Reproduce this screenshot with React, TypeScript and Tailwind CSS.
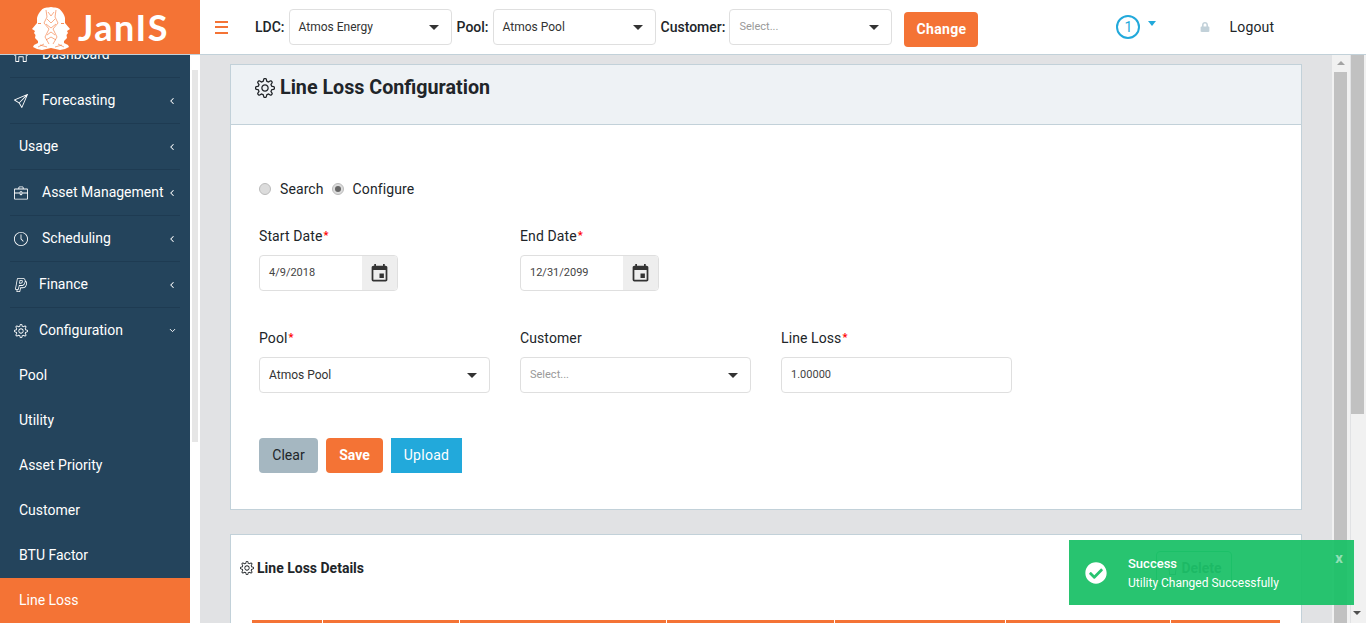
import { ChevronDown, ChevronLeft } from "lucide-react";
import { FaCheckCircle, FaLock } from "react-icons/fa";
import { MdEvent } from "react-icons/md";
import {
  SlBriefcase,
  SlClock,
  SlHome,
  SlPaperPlane,
  SlPaypal,
  SlSettings,
  SlTrash,
} from "react-icons/sl";

const font = { fontFamily: "Roboto, sans-serif" };

function Logo() {
  const half = (
    <>
      <path
        d="M19 0C15 1 12 0 9.500 3 7 6 5.500 8 5 11L5 16 0 22 3 24 2 26 3.500 28 3 31 6 34 6 36 2 38 1 40 5 42 10 43 19 41Z"
        fill="#fff"
      />
      <path
        d="M14 3 15 10 12 16 17 22 13 30 17 37M16 5 19 9M15 12 19 16M14 17 19 21M15 28 19 25M14 33 19 30M8 38 15 40M6 40 12 37"
        stroke="#f47435"
        strokeWidth="0.6"
        fill="none"
      />
      <path d="M6 16.500H9" stroke="#f47435" strokeWidth="0.8" />
    </>
  );
  return (
    <svg width="38" height="43" viewBox="0 0 38 43" className="mt-[3px] shrink-0">
      {half}
      <g transform="translate(38 0) scale(-1 1)">{half}</g>
    </svg>
  );
}

function Chevron({ open }: { open?: boolean }) {
  return open ? (
    <ChevronDown size={9} strokeWidth={2.5} className="text-white" />
  ) : (
    <ChevronLeft size={10} strokeWidth={2.5} className="text-white" />
  );
}

const mainMenu = [
  { name: "Dashboard", icon: <SlHome size={14} />, pad: "pl-[42px]" },
  { name: "Forecasting", icon: <SlPaperPlane size={14} />, pad: "pl-[42px]", arrow: true },
  { name: "Usage", pad: "pl-[19px]", arrow: true },
  { name: "Asset Management", icon: <SlBriefcase size={14} />, pad: "pl-[42px]", arrow: true },
  { name: "Scheduling", icon: <SlClock size={14} />, pad: "pl-[42px]", arrow: true },
  { name: "Finance", icon: <SlPaypal size={14} />, pad: "pl-[39px]", arrow: true },
];

const subMenu = ["Pool", "Utility", "Asset Priority", "Customer", "BTU Factor"];

function Sidebar() {
  return (
    <aside className="relative flex h-full w-[200px] shrink-0 overflow-hidden bg-white">
      <div className="h-full w-[190px] shrink-0 overflow-hidden bg-[#24445c] text-[14px] text-white">
        <div className="-mt-[23px]">
          {mainMenu.map((item) => (
            <div key={item.name} className="relative mx-[10px] flex h-[46px] items-center border-b border-[#1e3b52]">
              {item.icon && <span className="absolute left-[4px]">{item.icon}</span>}
              <span className={`-ml-[10px] ${item.pad}`}>{item.name}</span>
              {item.arrow && (
                <span className="absolute right-[3px]">
                  <Chevron />
                </span>
              )}
            </div>
          ))}
          <div className="relative mx-[10px] flex h-[45px] items-center">
            <span className="absolute left-[4px]">
              <SlSettings size={14} />
            </span>
            <span className="-ml-[10px] pl-[39px]">Configuration</span>
            <span className="absolute right-[3px]">
              <Chevron open />
            </span>
          </div>
          {subMenu.map((name) => (
            <div key={name} className="flex h-[45px] items-center pl-[19px]">
              {name}
            </div>
          ))}
          <div className="flex h-[45px] items-center bg-[#f47335] pl-[19px]">Line Loss</div>
        </div>
      </div>
      <div className="ml-[2px] mt-[15px] h-[372px] w-[6px] bg-[#e6e6e6]" />
    </aside>
  );
}

function Caret() {
  return <span className="h-0 w-0 border-x-[5px] border-t-[5px] border-x-transparent border-t-[#333]" />;
}

function Select({ value, placeholder, className }: { value?: string; placeholder?: string; className: string }) {
  return (
    <div
      className={`flex h-[36px] items-center justify-between rounded-[4px] border border-[#dfdfdf] bg-white pl-[9px] pr-[9px] ${className}`}
    >
      {value ? (
        <span className="text-[12px] text-[#333]">{value}</span>
      ) : (
        <span className="text-[11px] text-[#999]">{placeholder}</span>
      )}
      <span className="flex w-[16px] justify-center">
        <Caret />
      </span>
    </div>
  );
}

function Header() {
  return (
    <header className="flex h-[55px] shrink-0 items-center border-b border-[#c2d1d9] bg-white">
      <div className="flex h-full w-[200px] shrink-0 items-center bg-[#f47335] pl-[32px]">
        <Logo />
        <span className="ml-[8px] text-[36px] font-bold leading-none tracking-[1.500px] text-white" style={{ fontFamily: "Lato, sans-serif" }}>
          JanIS
        </span>
      </div>
      <div className="ml-[15px] flex w-[13px] flex-col gap-[3.500px]">
        <span className="h-[2px] bg-[#f47335]" />
        <span className="h-[2px] bg-[#f47335]" />
        <span className="h-[2px] bg-[#f47335]" />
      </div>
      <span className="ml-[27px] text-[14px] font-medium text-[#212529]">LDC:</span>
      <Select value="Atmos Energy" className="ml-[4px] w-[163px]" />
      <span className="ml-[5px] text-[14px] font-medium text-[#212529]">Pool:</span>
      <Select value="Atmos Pool" className="ml-[4px] w-[163px]" />
      <span className="ml-[5px] text-[14px] font-medium text-[#212529]">Customer:</span>
      <Select placeholder="Select..." className="ml-[4px] w-[163px]" />
      <button className="ml-[12px] mt-[5px] h-[35px] w-[74px] rounded-[4px] bg-[#f47335] text-[14px] font-bold tracking-[0.3px] text-white">
        Change
      </button>
      <span className="ml-[138px] flex h-[24px] w-[24px] items-center justify-center rounded-full border-2 border-[#22a9db] text-[14px] text-[#22a9db]">
        1
      </span>
      <span className="-mt-[8px] ml-[8px] h-0 w-0 border-x-[4.500px] border-t-[5px] border-x-transparent border-t-[#22a9db]" />
      <span className="ml-[44px] text-[#c2d1d9]">
        <FaLock size={10} />
      </span>
      <span className="ml-[19px] text-[14px] tracking-[0.2px] text-[#212529]">Logout</span>
    </header>
  );
}

function Radio({ checked }: { checked?: boolean }) {
  return (
    <span className="flex h-[12px] w-[12px] items-center justify-center rounded-full border border-[#bbb] bg-[#dcdcdc]">
      {checked && <span className="h-[6px] w-[6px] rounded-full bg-[#666]" />}
    </span>
  );
}

function Field({ label, required, children }: { label: string; required?: boolean; children: React.ReactNode }) {
  return (
    <div>
      <div className="flex h-[20px] items-center text-[14px] tracking-[0.1px] text-[#212529]">
        {label}
        {required && <span className="ml-[1px] text-[11px] font-bold text-[#f00]">*</span>}
      </div>
      <div className="mt-[9px]">{children}</div>
    </div>
  );
}

function DateInput({ value }: { value: string }) {
  return (
    <div className="flex h-[36px] w-[139px] overflow-hidden rounded-[4px] border border-[#dfdfdf]">
      <div className="flex flex-1 items-center pl-[9px] text-[11px] text-[#444]">{value}</div>
      <div className="flex w-[35px] items-center justify-center bg-[#eeeeee] text-[#333]">
        <MdEvent size={21} />
      </div>
    </div>
  );
}

const columns = ["w-[70px]", "w-[136px]", "w-[206px]", "w-[167px]", "w-[170px]", "w-[164px]", "w-[109px]"];

function Content() {
  return (
    <main className="h-full w-[1102px] shrink-0 overflow-hidden pl-[30px] pt-[9px]">
      <section className="h-[446px] w-[1072px] border border-[#c2d1d9] bg-white">
        <div className="flex h-[60px] items-center gap-[5px] border-b border-[#c2d1d9] bg-[#eef2f5] pb-[15px] pl-[24px] pt-[2px]">
          <SlSettings size={20} className="text-[#212529]" />
          <h1 className="text-[19.700px] font-bold text-[#212529]">Line Loss Configuration</h1>
        </div>
        <div className="pl-[28px]">
          <div className="mt-[55px] flex h-[18px] items-center text-[14px] tracking-[0.1px] text-[#212529]">
            <Radio />
            <span className="ml-[9px]">Search</span>
            <span className="ml-[8px]">
              <Radio checked />
            </span>
            <span className="ml-[9px]">Configure</span>
          </div>
          <div className="mt-[28px] grid w-[753px] grid-cols-3 gap-x-[30px]">
            <Field label="Start Date" required>
              <DateInput value="4/9/2018" />
            </Field>
            <Field label="End Date" required>
              <DateInput value="12/31/2099" />
            </Field>
            <div />
          </div>
          <div className="mt-[37px] grid w-[753px] grid-cols-3 gap-x-[30px]">
            <Field label="Pool" required>
              <Select value="Atmos Pool" className="w-[231px]" />
            </Field>
            <Field label="Customer">
              <Select placeholder="Select..." className="w-[231px]" />
            </Field>
            <Field label="Line Loss" required>
              <div className="flex h-[36px] w-[231px] items-center rounded-[4px] border border-[#dfdfdf] pl-[9px] text-[11px] text-[#444]">
                1.00000
              </div>
            </Field>
          </div>
          <div className="mt-[45px] flex gap-[8px] text-[14px]">
            <button className="h-[35px] w-[59px] rounded-[4px] bg-[#a5b7c1] text-[#212529]">Clear</button>
            <button className="h-[35px] w-[57px] rounded-[4px] bg-[#f47335] font-bold text-white">Save</button>
            <button className="h-[35px] w-[71px] bg-[#22a9db] tracking-[0.3px] text-white">Upload</button>
          </div>
        </div>
      </section>
      <section className="mt-[24px] h-[200px] w-[1072px] border border-[#c2d1d9] bg-white">
        <div className="flex h-[66px] items-center justify-between pl-[9px] pr-[69px]">
          <div className="flex items-center gap-[3px] text-[14px] font-bold text-[#212529]">
            <SlSettings size={14} />
            Line Loss Details
          </div>
          <button className="flex h-[35px] w-[76px] items-center justify-center gap-[2px] rounded-[4px] border border-[#1fa866] text-[14px] font-bold text-[#212529]">
            <SlTrash size={13} />
            Delete
          </button>
        </div>
        <div className="ml-[21px] mt-[19px] flex gap-[1px]">
          {columns.map((w) => (
            <div key={w} className={`h-[20px] bg-[#f47335] ${w}`} />
          ))}
        </div>
      </section>
    </main>
  );
}

function Scrollbars() {
  return (
    <div className="flex h-full flex-1 bg-[#e1e2e4]">
      <div className="flex h-full w-[18px] flex-col items-center bg-[#f1f1f1] pl-[2px] pr-[3px]">
        <span className="mt-[6px] h-0 w-0 shrink-0 border-x-[4px] border-b-[4px] border-x-transparent border-b-[#a3a3a3]" />
        <span className="mt-[7px] w-[13px] flex-1 bg-[#c1c1c1]" />
      </div>
      <div className="ml-[1px] flex h-full flex-1 flex-col bg-[#f1f1f1]">
        <div className="h-[359px] w-[13px] bg-[#c1c1c1]" />
        <span className="ml-[2px] mt-[197px] h-0 w-0 border-x-[4px] border-t-[4px] border-x-transparent border-t-[#505050]" />
      </div>
    </div>
  );
}

export default function App() {
  return (
    <div className="relative flex h-[623px] w-[1366px] flex-col overflow-hidden bg-[#e1e2e4]" style={font}>
      <Header />
      <div className="flex min-h-0 flex-1">
        <Sidebar />
        <Content />
        <div className="h-full w-[30px]" />
        <Scrollbars />
      </div>
      <div className="absolute left-[1069px] top-[540px] flex h-[65px] w-[285px] items-center bg-[#1cc168]/95 pl-[16px] text-white">
        <FaCheckCircle size={22} />
        <div className="ml-[21px] pt-[1px] text-[12px]">
          <div className="text-[13px] font-medium leading-[19px]">Success</div>
          <div className="mt-[1px] leading-[19px]">Utility Changed Successfully</div>
        </div>
        <span className="absolute right-[11px] top-[7px] text-[15px] font-bold text-white/50">x</span>
      </div>
    </div>
  );
}
